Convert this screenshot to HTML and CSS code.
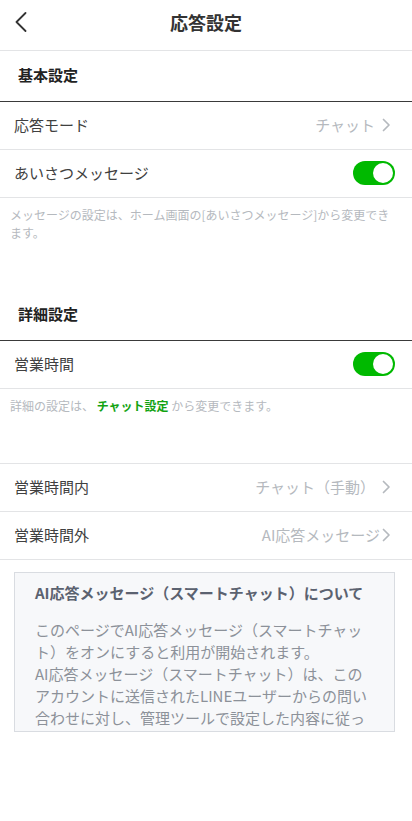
FILE: index.html
```html
<!DOCTYPE html>
<html lang="ja">
<head>
<meta charset="utf-8">
<meta name="viewport" content="width=device-width, initial-scale=1">
<title>応答設定</title>
<link rel="stylesheet" href="styles.css">
</head>
<body>
<header class="topbar">
  <button class="back" aria-label="戻る">
    <svg width="12" height="20" viewBox="0 0 12 20"><path d="M10.5 1 L1.5 10 L10.5 19" fill="none" stroke="#333" stroke-width="1.8" stroke-linecap="round" stroke-linejoin="round"/></svg>
  </button>
  <h1 class="title">応答設定</h1>
</header>

<section>
  <h2 class="section-head">基本設定</h2>
  <div class="row">
    <span class="label">応答モード</span>
    <span class="value">チャット<svg class="chev" width="9" height="14" viewBox="0 0 9 14"><path d="M1.5 1.5 L7 7 L1.5 12.5" fill="none" stroke="#b5b9be" stroke-width="1.7" stroke-linecap="round" stroke-linejoin="round"/></svg></span>
  </div>
  <div class="row">
    <span class="label">あいさつメッセージ</span>
    <span class="toggle on"><span class="knob"></span></span>
  </div>
  <p class="note">メッセージの設定は、ホーム画面の[あいさつメッセージ]から変更できます。</p>
</section>

<section>
  <h2 class="section-head">詳細設定</h2>
  <div class="row">
    <span class="label">営業時間</span>
    <span class="toggle on"><span class="knob"></span></span>
  </div>
  <p class="note">詳細の設定は、 <a class="link" href="#">チャット設定</a> から変更できます。</p>
</section>

<section class="list">
  <div class="row">
    <span class="label">営業時間内</span>
    <span class="value">チャット（手動）<svg class="chev" width="9" height="14" viewBox="0 0 9 14"><path d="M1.5 1.5 L7 7 L1.5 12.5" fill="none" stroke="#b5b9be" stroke-width="1.7" stroke-linecap="round" stroke-linejoin="round"/></svg></span>
  </div>
  <div class="row">
    <span class="label">営業時間外</span>
    <span class="value">AI応答メッセージ<svg class="chev tight" width="9" height="14" viewBox="0 0 9 14"><path d="M1.5 1.5 L7 7 L1.5 12.5" fill="none" stroke="#b5b9be" stroke-width="1.7" stroke-linecap="round" stroke-linejoin="round"/></svg></span>
  </div>
</section>

<div class="infobox">
  <h3 class="info-title">AI応答メッセージ（スマートチャット）について</h3>
  <p class="info-body">このページでAI応答メッセージ（スマートチャット）をオンにすると利用が開始されます。<br>AI応答メッセージ（スマートチャット）は、このアカウントに送信されたLINEユーザーからの問い合わせに対し、管理ツールで設定した内容に従っ</p>
</div>
</body>
</html>
```

FILE: styles.css
```css
* {
  box-sizing: border-box;
}

html, body {
  margin: 0;
  padding: 0;
  background: #ffffff;
}

body {
  font-family: "Noto Sans CJK JP", "Noto Sans", sans-serif;
  color: #3c3c3c;
  width: 412px;
}

.topbar {
  height: 51px;
  border-bottom: 1px solid #e3e4e6;
  display: flex;
  align-items: flex-start;
  justify-content: center;
  padding-top: 8px;
  position: relative;
}

.back {
  position: absolute;
  left: 15px;
  top: 12px;
  padding: 0;
  margin: 0;
  border: 0;
  background: none;
  display: flex;
}

.title {
  margin: 0;
  font-size: 18px;
  line-height: 28px;
  font-weight: 700;
  color: #333333;
}

.section-head {
  margin: 0;
  height: 51px;
  border-bottom: 1px solid #3a3a3a;
  padding: 0 0 3px 18px;
  display: flex;
  align-items: center;
  font-size: 15px;
  font-weight: 700;
  color: #222222;
}

.row {
  height: 48px;
  border-bottom: 1px solid #e3e4e6;
  display: flex;
  align-items: center;
  justify-content: space-between;
  padding: 0 17px 2px 14px;
}

.label {
  font-size: 15px;
  color: #404040;
}

.value {
  display: flex;
  align-items: center;
  font-size: 15px;
  color: #b5b9be;
  padding-right: 4px;
}

.chev {
  margin-left: 7px;
}

.chev.tight {
  margin-left: 2px;
}

.toggle {
  width: 42px;
  height: 24px;
  border-radius: 12px;
  background: #00b900;
  display: flex;
  align-items: center;
  padding: 0 2px;
}

.toggle.on {
  justify-content: flex-end;
}

.knob {
  width: 20px;
  height: 20px;
  border-radius: 50%;
  background: #ffffff;
}

.note {
  margin: 0;
  padding: 8px 12px 48px 10px;
  font-size: 12px;
  line-height: 18px;
  color: #b5b9be;
}

.link {
  color: #12a312;
  font-weight: 700;
  text-decoration: none;
}

.list {
  border-top: 1px solid #e3e4e6;
}

.infobox {
  margin: 12px 17px 0 14px;
  height: 160px;
  overflow: hidden;
  background: #f7f8fa;
  border: 1px solid #d9dce1;
  padding: 9px 20px 0 20px;
}

.info-title {
  margin: 0 0 15px 0;
  font-size: 15px;
  line-height: 22px;
  font-weight: 700;
  color: #5b6270;
}

.info-body {
  margin: 0;
  font-size: 15px;
  line-height: 22px;
  color: #8c9199;
}
```
